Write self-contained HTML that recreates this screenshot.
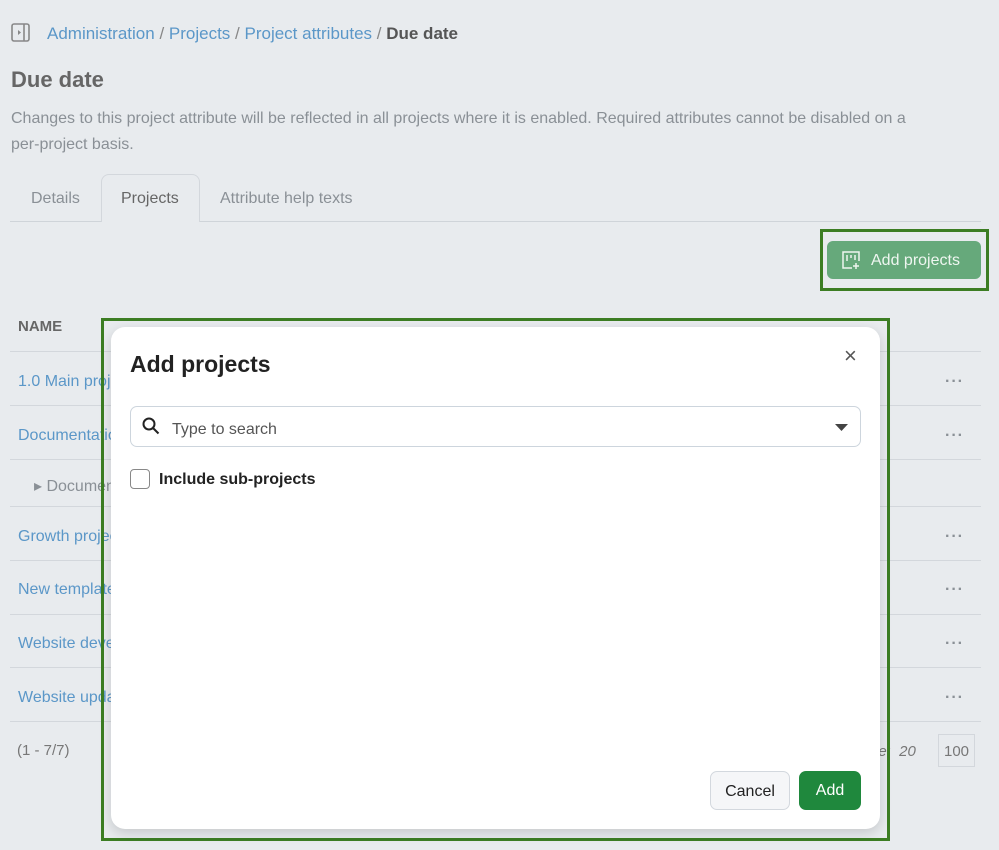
<!DOCTYPE html>
<html><head><meta charset="utf-8"><style>
*{box-sizing:border-box;margin:0;padding:0}
body{width:999px;height:850px;background:#e8ebee;font-family:"Liberation Sans",sans-serif;position:relative;overflow:hidden;color:#555}
.a{position:absolute}
.link{color:#5b97c8}
.row{position:absolute;left:10px;width:971px;border-top:1px solid #d3d7dc}
.rt{position:absolute;left:18px;font-size:16px;color:#5b97c8}
.dots{position:absolute;left:945px;font-size:16px;color:#8a9096;letter-spacing:1px;font-weight:bold}
</style></head><body>
<svg class="a" style="left:11px;top:23px" width="20" height="20" viewBox="0 0 20 20"><rect x="1" y="1" width="17" height="17" rx="2" fill="none" stroke="#888" stroke-width="1.6"/><line x1="13" y1="1" x2="13" y2="18" stroke="#888" stroke-width="1.6"/><path d="M7 7l3 2.5L7 12z" fill="#888"/></svg>
<div class="a" style="left:47px;top:24px;font-size:17px;color:#888"><span class="link">Administration</span> / <span class="link">Projects</span> / <span class="link">Project attributes</span> / <b style="color:#555">Due date</b></div>
<div class="a" style="left:11px;top:67px;font-size:22px;font-weight:bold;color:#666">Due date</div>
<div class="a" style="left:11px;top:106px;width:930px;font-size:16px;line-height:26px;color:#8a9096">Changes to this project attribute will be reflected in all projects where it is enabled. Required attributes cannot be disabled on a per&#8209;project basis.</div>
<div class="a" style="left:10px;top:221px;width:971px;border-top:1px solid #cfd4d9"></div>
<div class="a" style="left:31px;top:190px;font-size:16px;color:#8a9096">Details</div>
<div class="a" style="left:101px;top:174px;width:99px;height:48px;border:1px solid #d3d7dc;border-bottom:none;border-radius:8px 8px 0 0;background:#e8ebee"></div>
<div class="a" style="left:121px;top:190px;font-size:16px;color:#666">Projects</div>
<div class="a" style="left:220px;top:190px;font-size:16px;color:#8a9096">Attribute help texts</div>
<div class="a" style="left:820px;top:229px;width:169px;height:62px;border:3px solid #3c7d23"></div>
<div class="a" style="left:827px;top:241px;width:154px;height:38px;border-radius:6px;background:#66a97b;color:#eef6f0;font-size:16px;padding:11px 0 0 44px">Add projects</div>
<svg class="a" style="left:841px;top:250px" width="20" height="20" viewBox="0 0 20 20" fill="none" stroke="#eef6f0" stroke-width="1.5"><path d="M11 18H2V2h16v9"/><path d="M6 5v6M10 5v3M14 5v5"/><path d="M15 13v6M12 16h6"/></svg>
<div class="a" style="left:18px;top:318px;font-size:15px;font-weight:bold;color:#666">NAME</div>
<div class="row" style="top:351px"></div><div class="row" style="top:405px"></div><div class="row" style="top:459px"></div><div class="row" style="top:506px"></div><div class="row" style="top:560px"></div><div class="row" style="top:614px"></div><div class="row" style="top:667px"></div><div class="row" style="top:721px"></div>
<div class="rt" style="top:373px">1.0 Main project</div>
<div class="rt" style="top:427px">Documentation</div>
<div class="rt" style="top:476px;left:34px;color:#8a9096">▸ Documentation</div>
<div class="rt" style="top:528px">Growth project</div>
<div class="rt" style="top:581px">New template</div>
<div class="rt" style="top:635px">Website development</div>
<div class="rt" style="top:689px">Website update</div>
<div class="dots" style="top:373px">···</div><div class="dots" style="top:427px">···</div><div class="dots" style="top:528px">···</div><div class="dots" style="top:581px">···</div><div class="dots" style="top:635px">···</div><div class="dots" style="top:689px">···</div>
<div class="a" style="left:17px;top:742px;font-size:15px;color:#777">(1 - 7/7)</div>
<div class="a" style="left:870px;top:743px;font-size:15px;color:#777;font-style:italic">ge: &nbsp;20</div>
<div class="a" style="left:938px;top:734px;width:37px;height:33px;border:1px solid #d3d7dc;font-size:15px;color:#777;padding:8px 0 0 5px">100</div>
<div class="a" style="left:101px;top:318px;width:789px;height:523px;border:3px solid #3c7d23"></div>
<div class="a" style="left:111px;top:327px;width:769px;height:502px;background:#fff;border-radius:14px;box-shadow:0 4px 12px rgba(0,0,0,.15)">
<div class="a" style="left:19px;top:24px;font-size:23px;font-weight:bold;color:#222">Add projects</div>
<div class="a" style="left:733px;top:16px;font-size:22px;color:#555">×</div>
<div class="a" style="left:19px;top:79px;width:731px;height:41px;border:1px solid #cdd5dd;border-radius:7px"></div>
<svg class="a" style="left:31px;top:90px" width="18" height="18" viewBox="0 0 18 18" fill="none" stroke="#222" stroke-width="2"><circle cx="7" cy="7" r="5.5"/><path d="M11 11l5.5 5.5"/></svg>
<div class="a" style="left:61px;top:94px;font-size:16px;color:#555">Type to search</div>
<svg class="a" style="left:724px;top:97px" width="14" height="8"><path d="M0 0h13L6.5 7z" fill="#444"/></svg>
<div class="a" style="left:19px;top:142px;width:20px;height:20px;border:1.5px solid #888;border-radius:4px"></div>
<div class="a" style="left:48px;top:144px;font-size:16px;font-weight:bold;color:#222">Include sub-projects</div>
<div class="a" style="left:599px;top:444px;width:80px;height:39px;border:1px solid #d3d8de;border-radius:7px;background:#f5f6f8;font-size:16px;color:#222;text-align:center;padding-top:11px">Cancel</div>
<div class="a" style="left:688px;top:444px;width:62px;height:39px;border-radius:7px;background:#1f883d;font-size:16px;color:#fff;text-align:center;padding-top:11px">Add</div>
</div>
</body></html>
